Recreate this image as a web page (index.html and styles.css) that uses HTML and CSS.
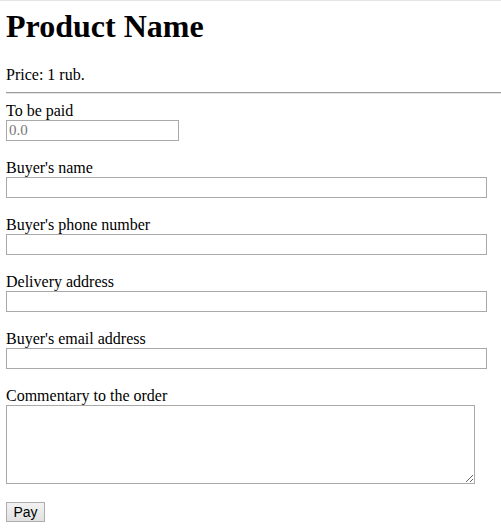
FILE: index.html
```html
<!DOCTYPE html>
<html>
<head>
<meta charset="utf-8">
<link rel="stylesheet" href="styles.css">
</head>
<body class="page">
<h1 class="title">Product Name</h1>
<p class="price">Price: 1 rub.</p>
<hr class="divider">
<form class="order">
  <div class="field">
    <label class="label" for="amount">To be paid</label>
    <input class="input input-short" id="amount" type="text" placeholder="0.0">
  </div>
  <div class="field">
    <label class="label" for="name">Buyer's name</label>
    <input class="input" id="name" type="text">
  </div>
  <div class="field">
    <label class="label" for="phone">Buyer's phone number</label>
    <input class="input" id="phone" type="text">
  </div>
  <div class="field">
    <label class="label" for="addr">Delivery address</label>
    <input class="input" id="addr" type="text">
  </div>
  <div class="field">
    <label class="label" for="email">Buyer's email address</label>
    <input class="input" id="email" type="text">
  </div>
  <div class="field field-last">
    <label class="label" for="comment">Commentary to the order</label>
    <textarea class="textarea" id="comment"></textarea>
  </div>
  <button class="pay" type="button">Pay</button>
</form>
</body>
</html>
```
FILE: styles.css
```css
html, body {
  margin: 0;
  padding: 0;
  background: #ffffff;
}
.page {
  border-top: 1px solid #e6e6e6;
  padding-left: 6px;
  font-family: "Liberation Serif", "Times New Roman", serif;
  font-size: 16px;
  color: #000;
}
.title {
  margin: 7px 0 19px 0;
  font-size: 32px;
  line-height: 37px;
  font-weight: bold;
}
.price {
  margin: 0;
  height: 19px;
  line-height: 21px;
}
.divider {
  margin: 9px 0 7px 0;
  border: 0;
  border-top: 1px solid #9d9d9d;
  border-bottom: 1px solid #e4e4e4;
  height: 0;
}
.order {
  display: flex;
  flex-direction: column;
  align-items: flex-start;
}
.field {
  display: flex;
  flex-direction: column;
  align-items: flex-start;
  margin-bottom: 17px;
}
.field-last {
  margin-bottom: 18px;
}
.label {
  display: block;
  line-height: 20px;
  height: 19px;
}
.input {
  box-sizing: border-box;
  width: 481px;
  height: 21px;
  margin: 0;
  padding: 1px 2px;
  border: 1px solid #a9a9a9;
  font-family: "Liberation Serif", "Times New Roman", serif;
  font-size: 15px;
  background: #fff;
  outline: none;
}
.input-short {
  width: 173px;
}
.input::placeholder {
  color: #777777;
}
.textarea {
  box-sizing: border-box;
  width: 469px;
  height: 79px;
  margin: 0;
  border: 1px solid #a9a9a9;
  font-family: "Liberation Serif", "Times New Roman", serif;
  font-size: 15px;
  resize: both;
  outline: none;
}
.pay {
  box-sizing: border-box;
  width: 39px;
  height: 20px;
  margin: 0;
  padding: 0;
  border: 1px solid #adadad;
  border-radius: 0;
  background: linear-gradient(#f2f2f2, #e1e1e1);
  font-family: "Liberation Sans", Arial, sans-serif;
  font-size: 14px;
  color: #000;
  line-height: 18px;
}
```
